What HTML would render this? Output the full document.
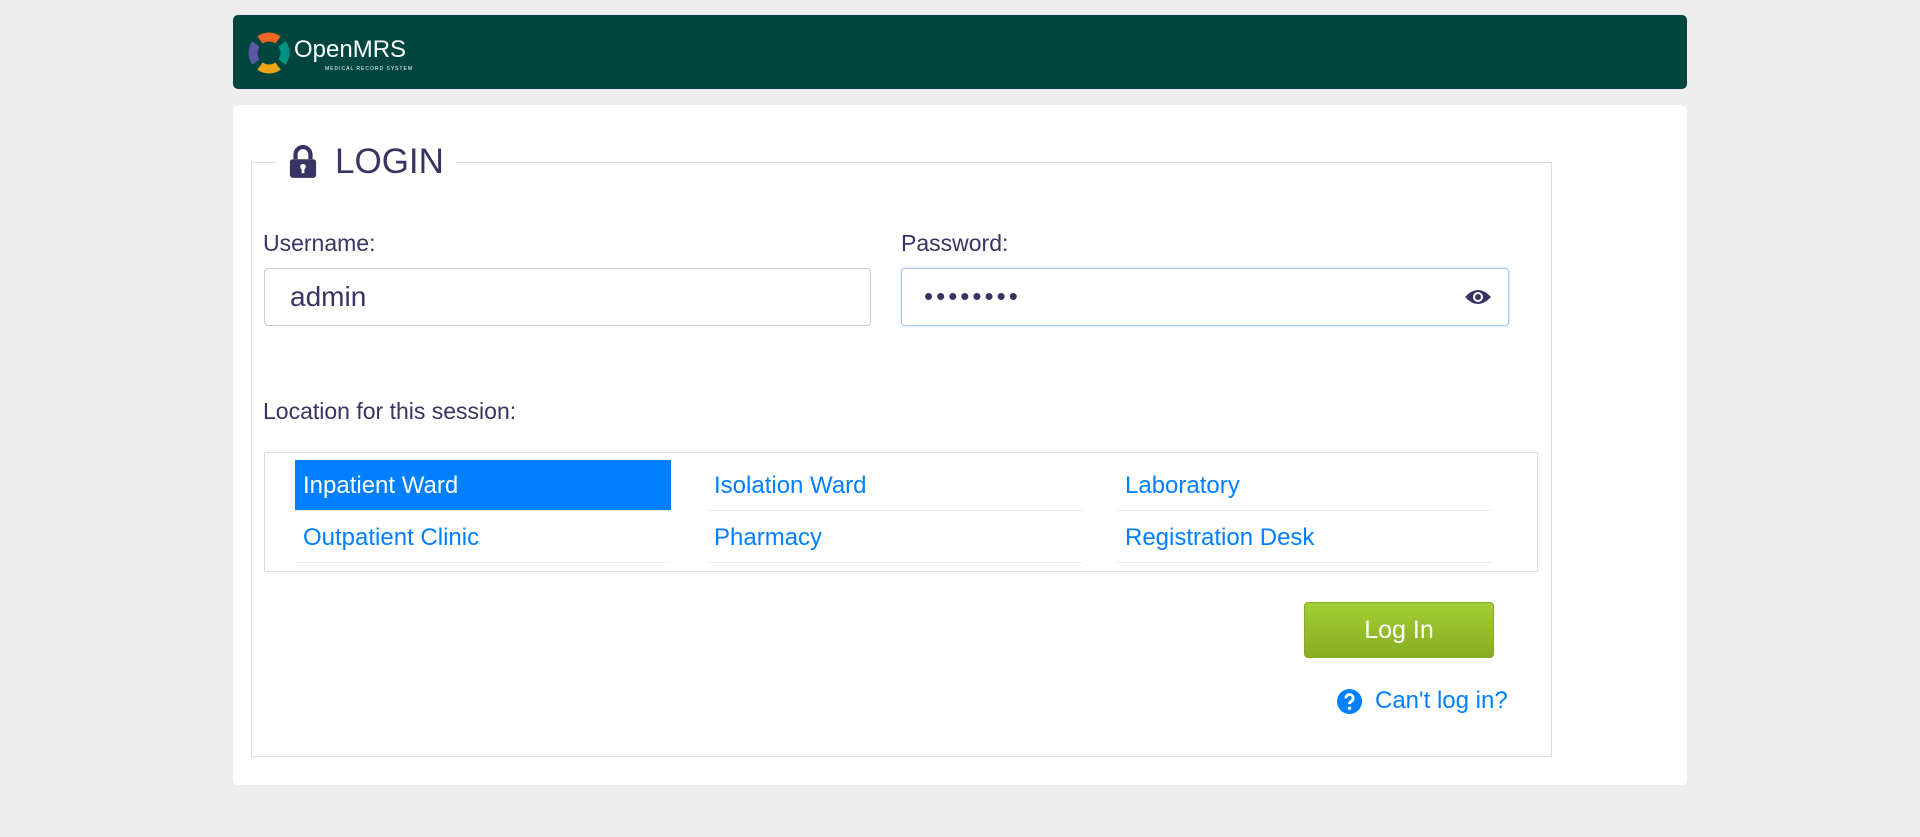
<!DOCTYPE html>
<html><head><meta charset="utf-8"><style>
body{margin:0;background:#eeeeee;font-family:"Liberation Sans",sans-serif;width:1920px;height:837px;overflow:hidden;position:relative;color:#363463}
.hdr{position:absolute;left:233px;top:15px;width:1454px;height:74px;background:#00463f;border-radius:5px}
.card{position:absolute;left:233px;top:105px;width:1454px;height:680px;background:#fff;border-radius:5px}
.fs{position:absolute;left:251px;top:162px;width:1299px;height:593px;border:1px solid #ddd}
.legend{position:absolute;left:277px;top:140px;background:#fff;padding:0 12px;height:44px;display:flex;align-items:center;font-size:35px;color:#363463}
.lbl{position:absolute;font-size:23px;color:#363463}
.inp{position:absolute;top:268px;height:58px;border:1px solid #ccc;border-radius:4px;box-sizing:border-box;background:#fff}
.loc{position:absolute;left:264px;top:452px;width:1274px;height:120px;border:1px solid #ddd;box-sizing:border-box}
.it{position:absolute;width:376px;height:51px;border-bottom:1px solid #eee;font-size:24px;color:#007fff;line-height:52px;padding-left:8px;box-sizing:border-box}
.sel{background:#007fff;color:#fff}
.btn{position:absolute;left:1304px;top:602px;width:190px;height:56px;border-radius:4px;background:linear-gradient(#a2cf33,#88ac22);border:1px solid #88a924;box-sizing:border-box;color:#fff;font-size:25px;text-align:center;line-height:54px}
</style></head><body>
<div class="hdr">
<svg style="position:absolute;left:15px;top:17px" width="42" height="42" viewBox="0 0 42 42">
<g fill="none" stroke-width="9">
<path d="M12 8 A15 15 0 0 1 30 8" stroke="#f26522"/>
<path d="M30 34 A15 15 0 0 1 12 34" stroke="#eea616"/>
<path d="M8 30 A15 15 0 0 1 8 12" stroke="#5b57a6"/>
<path d="M34 12 A15 15 0 0 1 34 30" stroke="#009384"/>
</g>
</svg>
<div style="position:absolute;left:61px;top:21px;color:#fff;font-size:24px">OpenMRS</div>
<div style="position:absolute;left:92px;top:51px;color:#fff;font-size:5px;letter-spacing:1px">MEDICAL RECORD SYSTEM</div>
</div>
<div class="card"></div>
<div class="fs"></div>
<div class="legend">
<svg width="28" height="34" viewBox="0 0 30 36" style="margin-right:18px"><path d="M7 15 v-5 a8 8 0 0 1 16 0 v5" fill="none" stroke="#363463" stroke-width="4.5"/><rect x="1" y="15" width="28" height="20" rx="3" fill="#363463"/><circle cx="15" cy="23" r="3" fill="#fff"/><rect x="13.5" y="23" width="3" height="7" fill="#fff"/></svg>
LOGIN</div>
<div class="lbl" style="left:263px;top:230px">Username:</div>
<div class="lbl" style="left:901px;top:230px">Password:</div>
<div class="inp" style="left:264px;width:607px"><span style="position:absolute;left:25px;top:12px;font-size:28px;color:#363463">admin</span></div>
<div class="inp" style="left:901px;width:608px;border-color:#aac8f0;box-shadow:0 0 3px #bcd6f5"><span style="position:absolute;left:22px;top:12px;font-size:26px;letter-spacing:3px;color:#363463">••••••••</span>
<svg style="position:absolute;right:16px;top:18px" width="28" height="20" viewBox="0 0 28 20"><path d="M1 10 Q14 -4 27 10 Q14 24 1 10z" fill="#363463"/><circle cx="14" cy="10" r="5" fill="#fff"/><circle cx="14" cy="10" r="3" fill="#363463"/></svg></div>
<div class="lbl" style="left:263px;top:398px">Location for this session:</div>
<div class="loc"></div>
<div class="it sel" style="left:295px;top:460px">Inpatient Ward</div>
<div class="it" style="left:706px;top:460px">Isolation Ward</div>
<div class="it" style="left:1117px;top:460px">Laboratory</div>
<div class="it" style="left:295px;top:512px">Outpatient Clinic</div>
<div class="it" style="left:706px;top:512px">Pharmacy</div>
<div class="it" style="left:1117px;top:512px">Registration Desk</div>
<div class="btn">Log In</div>
<svg style="position:absolute;left:1337px;top:689px" width="25" height="25" viewBox="0 0 24 24"><circle cx="12" cy="12" r="12" fill="#007fff"/><path d="M8.5 9 a3.5 3.5 0 1 1 5 3 c-1.2 .7 -1.5 1.2 -1.5 2.5" fill="none" stroke="#fff" stroke-width="2.8"/><circle cx="12" cy="18.5" r="1.7" fill="#fff"/></svg>
<div style="position:absolute;left:1375px;top:687px;font-size:24px;color:#007fff">Can't log in?</div>
</body></html>
